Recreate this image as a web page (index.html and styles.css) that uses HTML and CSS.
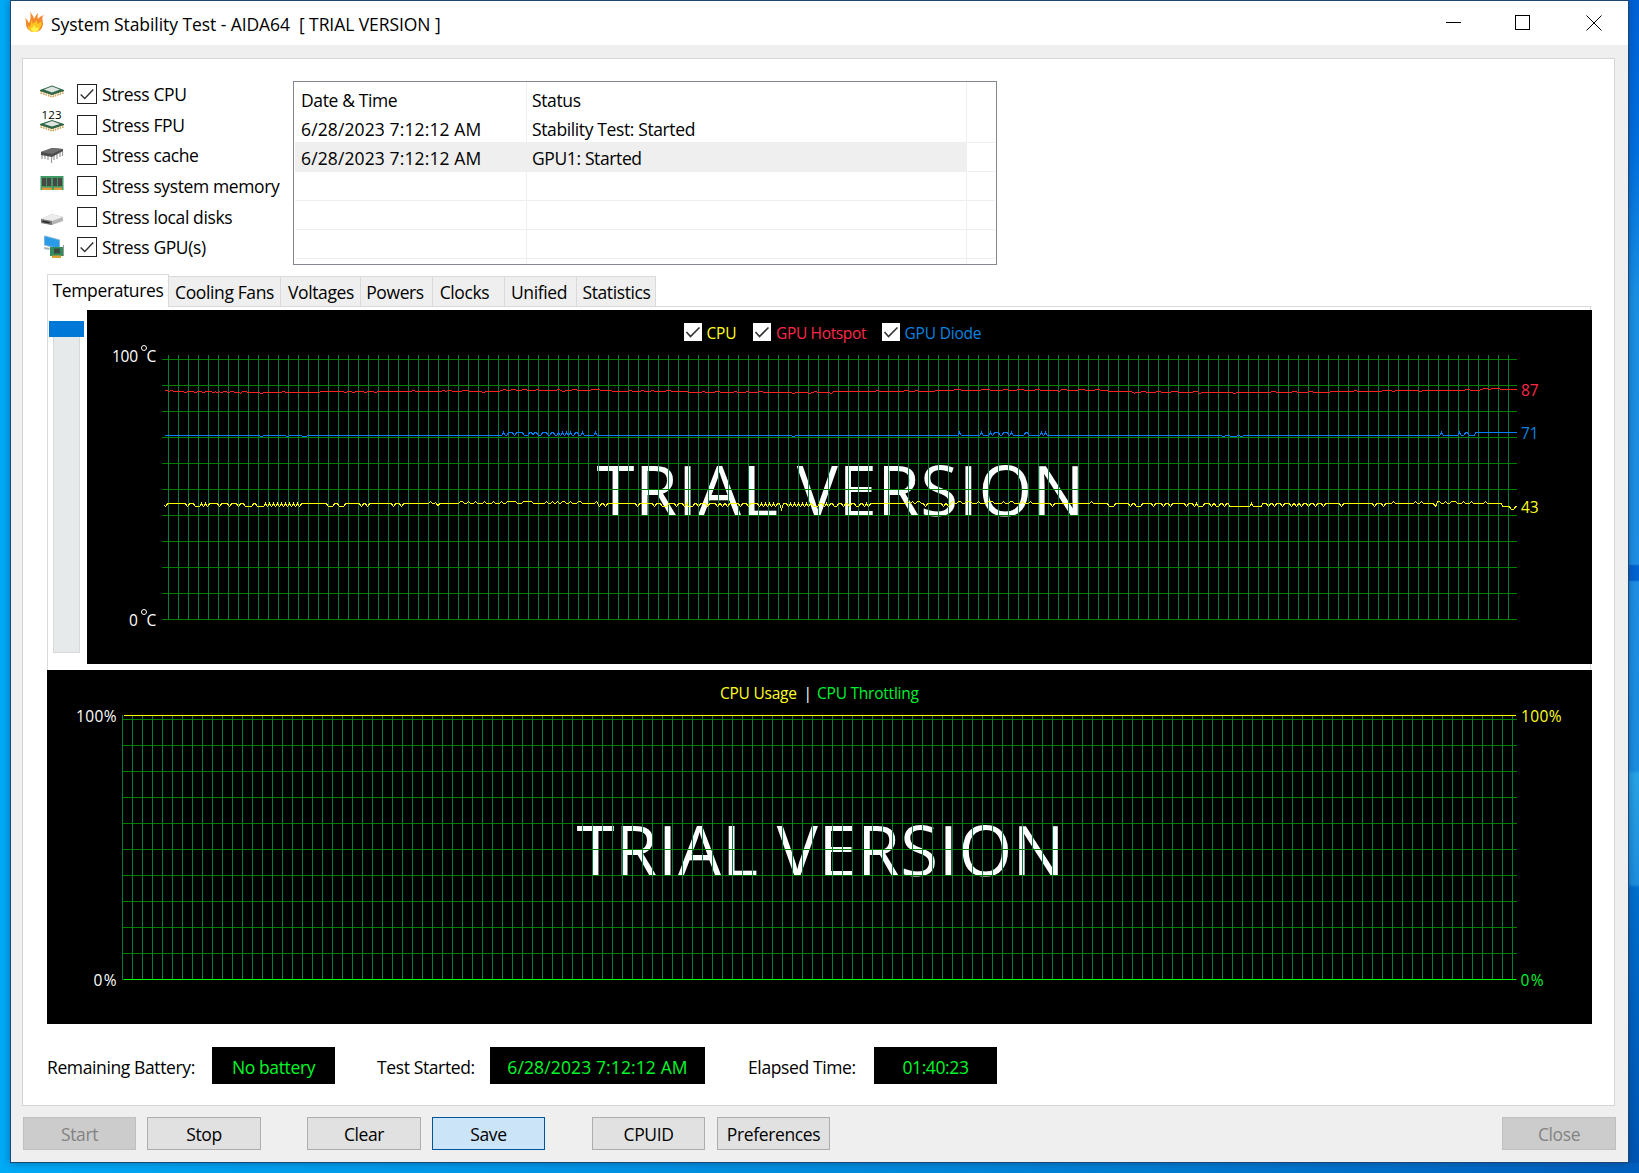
FILE: index.html
```html
<!DOCTYPE html>
<html lang="en">
<head>
    <meta charset="UTF-8">
    <meta name="viewport" content="width=device-width, initial-scale=1.0">
    <title>System Stability Test - AIDA64</title>
    <link rel="stylesheet" href="styles.css">
</head>
<body>
    <div class="window">
        <div class="titlebar">
            <svg class="flame" width="20" height="24" viewBox="0 0 20 24">
                <path d="M5 1c1 3 4 5 4 8 1-2 2-4 4-6 0 2-1 4 0 6 1-2 3-3 6-4-3 3-1 5-1 8 0 5-3 9-8 9-6 0-9-4-9-8 0-2 0-4-1-6 2 1 3 3 4 5 2-4 2-8 1-12z" fill="#f58a2c"/>
                <path d="M6 10c1 2 2 3 2 4 1-1 3-3 4-4 0 2 0 3 1 4l4-3c-1 3 0 4-2 7-1 3-4 4-6 4-4 0-6-3-6-6l2 1c1-2 1-4 1-7z" fill="#ffc51f"/>
                <path d="M6 18c2 1 2-2 3-3l2 3 3-1c0 3-2 5-4 5-3 0-4-2-4-4z" fill="#fff04a"/>
            </svg>
            <span class="title-text">System Stability Test - AIDA64&nbsp; [ TRIAL VERSION ]</span>
            <svg class="win-buttons" width="156" height="16" viewBox="0 0 156 16" shape-rendering="crispEdges">
                <path d="M0 7.500H15M69.500.500h14v14h-14z" fill="none" stroke="#000"/>
                <path d="M140.500 .500l15 15M155.500 .500l-15 15" stroke="#000" shape-rendering="auto"/>
            </svg>
        </div>

        <div class="panel">
            <div class="top">
                <div class="stress-list">
                    <div class="stress">
                        <svg class="icon" viewBox="0 0 24 30">
                            <path d="M1 12l11 4 11-4v2l-11 4-11-4z" fill="none" stroke="#c9a04e" stroke-width="1.500" stroke-dasharray="1.500 1"/>
                            <path d="M0 11l12-4.500 12 4.500v1l-12 4-12-4z" fill="#2f6548"/>
                            <path d="M4 10.500l8-3 8 3-8 3z" fill="#dfe6e1"/>
                        </svg>
                        <span class="box"><svg viewBox="0 0 20 20"><path d="M3 10.500l4.500 4.500 9.500-10"/></svg></span>
                        <span>Stress CPU</span>
                    </div>
                    <div class="stress">
                        <svg class="icon" viewBox="0 0 24 30">
                            <text x="1.500" y="8.500" textLength="20">123</text>
                            <path d="M1 15l11 4 11-4v2l-11 4-11-4z" fill="none" stroke="#c9a04e" stroke-width="1.500" stroke-dasharray="1.500 1"/>
                            <path d="M0 14l12-4 12 4v1l-12 4-12-4z" fill="#2f6548"/>
                            <path d="M4 14l8-3 8 3-8 2.500z" fill="#dfe6e1"/>
                        </svg>
                        <span class="box"></span>
                        <span>Stress FPU</span>
                    </div>
                    <div class="stress">
                        <svg class="icon" viewBox="0 0 24 30">
                            <path d="M2 14v5M5 15v4M8 16v4M11.500 16v7M14 15v5M17 13v6M20 12v5M22.500 11v5" stroke="#9a9a9a" stroke-width="1.200"/>
                            <path d="M1 12l11-4 11 1v2l-11 6-11-2z" fill="#4c4c4c"/>
                            <path d="M1 12l11-4 11 1-11 5z" fill="#6e6e6e"/>
                        </svg>
                        <span class="box"></span>
                        <span>Stress cache</span>
                    </div>
                    <div class="stress">
                        <svg class="icon" viewBox="0 0 24 30">
                            <path d="M.500 5h23v14h-23z" fill="#3f9a63"/>
                            <path d="M2 7h4v8h-4zM7 7h4v8h-4zM13 7h4v8h-4zM18 7h4v8h-4z" fill="#484848"/>
                            <path d="M2 16.500h10v2.500h-10zM14 16.500h8v2.500h-8z" fill="#d99a3b"/>
                        </svg>
                        <span class="box"></span>
                        <span>Stress system memory</span>
                    </div>
                    <div class="stress">
                        <svg class="icon" viewBox="0 0 24 30">
                            <path d="M1 17l11-5 11 3v4l-11 4-11-2z" fill="#b5b5b5"/>
                            <path d="M1 17l11-5 11 3-11 4z" fill="#ececec"/>
                            <path d="M1 17l11 2v4l-11-2z" fill="#777"/>
                            <path d="M2.500 18.500l7 1.500v1.500l-7-1.500z" fill="#222"/>
                        </svg>
                        <span class="box"></span>
                        <span>Stress local disks</span>
                    </div>
                    <div class="stress">
                        <svg class="icon" viewBox="0 0 24 30">
                            <path d="M4.500 4l15 4v9l-15-4z" fill="#2a9be8" stroke="#7cb2d6"/>
                            <path d="M4 15l6 1-1 2-5-1z" fill="#a8b4bc"/>
                            <path d="M10 15h13v9h-13z" fill="#348c5c"/>
                            <path d="M14 16.500h6v5h-6z" fill="#3b4b42"/>
                            <path d="M23.500 13v11" stroke="#999"/>
                            <path d="M12 23.500h9v2.500h-9z" fill="#e0a030"/>
                        </svg>
                        <span class="box"><svg viewBox="0 0 20 20"><path d="M3 10.500l4.500 4.500 9.500-10"/></svg></span>
                        <span>Stress GPU(s)</span>
                    </div>
                </div>

                <div class="log">
                    <div class="log-row log-head"><span>Date &amp; Time</span><span>Status</span><span></span></div>
                    <div class="log-row"><span class="date">6/28/2023 7:12:12 AM</span><span>Stability Test: Started</span><span></span></div>
                    <div class="log-row selected"><span class="date">6/28/2023 7:12:12 AM</span><span>GPU1: Started</span><span></span></div>
                    <div class="log-row"><span></span><span></span><span></span></div>
                    <div class="log-row"><span></span><span></span><span></span></div>
                    <div class="log-row"><span></span><span></span><span></span></div>
                    <div class="log-row"><span></span><span></span><span></span></div>
                </div>
            </div>

            <div class="tabs">
                <div class="tab active">Temperatures</div>
                <div class="tab t-fans">Cooling Fans</div>
                <div class="tab t-volt">Voltages</div>
                <div class="tab t-pow">Powers</div>
                <div class="tab t-clk">Clocks</div>
                <div class="tab t-uni">Unified</div>
                <div class="tab t-stat">Statistics</div>
            </div>

            <div class="tab-page">
                <div class="slider">
                    <div class="thumb"></div>
                    <div class="track"></div>
                </div>
                <svg id="tempChart" class="chart" width="1505" height="354" viewBox="87 310 1505 354">
                    <text class="watermark" x="596.500" y="515.500" textLength="488">TRIAL VERSION</text>
                    <g class="grid"></g>
                    <g class="series"></g>
                    <g class="checks">
                        <path class="check-bg" d="M684 323h18v18h-18zM753 323h18v18h-18zM882 323h18v18h-18z"/>
                        <path class="check-mark" d="M686.500 332l4 4.500 9-9M755.500 332l4 4.500 9-9M884.500 332l4 4.500 9-9"/>
                    </g>
                    <text class="yellow" x="706.500" y="339" textLength="30">CPU</text>
                    <text class="red" x="776" y="339" textLength="90.500">GPU Hotspot</text>
                    <text class="blue" x="904.500" y="339" textLength="77">GPU Diode</text>
                    <text x="112" y="361.500" textLength="26">100</text>
                    <text x="146.500" y="361.500">C</text>
                    <text x="129" y="625.500">0</text>
                    <text x="146.500" y="625.500">C</text>
                    <circle cx="144" cy="348" r="2.500"/>
                    <circle cx="144" cy="612" r="2.500"/>
                    <text class="red" x="1521" y="395.500" textLength="17.500">87</text>
                    <text class="blue" x="1521" y="438.500" textLength="17.500">71</text>
                    <text class="yellow" x="1521" y="512.500" textLength="17.500">43</text>
                </svg>
            </div>

            <svg id="cpuChart" class="chart cpu-chart" width="1545" height="354" viewBox="47 670 1545 354">
                <text class="watermark" x="576.500" y="875.500" textLength="488">TRIAL VERSION</text>
                <g class="grid"></g>
                <g class="series"></g>
                <text class="yellow" x="720" y="699" textLength="77">CPU Usage</text>
                <text x="803.500" y="699">|</text>
                <text class="green" x="817" y="699" textLength="102">CPU Throttling</text>
                <text x="76" y="721.500" textLength="40.500">100%</text>
                <text x="93.500" y="985.500" textLength="23">0%</text>
                <text class="yellow" x="1521" y="721.500" textLength="40.500">100%</text>
                <text class="green" x="1520.500" y="985.500" textLength="23">0%</text>
            </svg>

            <div class="status">
                <span class="label lb-bat">Remaining Battery:</span>
                <span class="readout r-bat">No battery</span>
                <span class="label lb-start">Test Started:</span>
                <span class="readout r-start date">6/28/2023 7:12:12 AM</span>
                <span class="label lb-time">Elapsed Time:</span>
                <span class="readout r-time">01:40:23</span>
            </div>
        </div>

        <div class="buttons">
            <button class="disabled start">Start</button>
            <button class="stop">Stop</button>
            <button class="clear">Clear</button>
            <button class="save">Save</button>
            <button class="cpuid">CPUID</button>
            <button class="prefs">Preferences</button>
            <button class="disabled close">Close</button>
        </div>
    </div>

    <script>
        function grid(svg, x0, x1, firstX, lastX, top, firstY) {
            let v = '', h = '';
            for (let x = firstX; x <= lastX; x += 10) v += `M${x + 0.5} ${top}V${firstY + 261}`;
            for (let i = 0; i <= 10; i++) h += `M${x0} ${firstY + i * 26 + 0.5}H${x1}`;
            svg.querySelector('.grid').innerHTML =
                `<path class="grid-v" d="${v}"/><path class="grid-h" d="${h}"/>`;
        }

        // base: [x, y] steps, blips: [x, dy, width]
        function line(svg, color, base, blips) {
            const end = 1516;
            let d = '';
            for (let x = 164; x <= end; x += 1) {
                let y = base[0][1];
                base.forEach(b => { if (x >= b[0]) y = b[1]; });
                blips.forEach(b => {
                    const half = (b[2] || 1) / 2;
                    const dist = Math.abs(x - b[0]) - half;
                    if (dist <= 0) y += b[1];
                    else if (dist < 1.5) y += b[1] / 2;
                });
                d += (d ? 'L' : 'M') + (x + 0.5) + ' ' + (Math.round(y) + 0.5);
            }
            svg.querySelector('.series').innerHTML += `<path stroke="${color}" d="${d}"/>`;
        }

        function blips(dy, list) {
            return list.map(p => Array.isArray(p) ? [p[0], dy, p[1]] : [p, dy, 1]);
        }

        const temp = document.getElementById('tempChart');
        const cpu = document.getElementById('cpuChart');
        grid(temp, 162, 1517, 168, 1508, 355, 359);
        grid(cpu, 122, 1517, 122, 1512, 715, 719);

        line(temp, '#ff2020', [[164, 391], [240, 392], [320, 391], [500, 390], [612, 391], [688, 392], [832, 391], [935, 390], [1108, 391], [1134, 392], [1330, 391], [1382, 390], [1480, 389]], [
            ...blips(-1, [[166, 2], [171, 2], [244, 4], [283, 3], [413, 3], [443, 3], [449, 4], [465, 6], [504, 3], [513, 4], [524, 5], [537, 2], [558, 3], [574, 4], [595, 8], [630, 3], [642, 3], [652, 3], [668, 4], [703, 3], [717, 4], [735, 3], [747, 3], [760, 5], [815, 3], [877, 3], [906, 4], [916, 3], [957, 7], [985, 8], [1005, 4], [1020, 6], [1037, 4], [1063, 6], [1081, 7], [1097, 4], [1143, 4], [1158, 5], [1174, 6], [1195, 4], [1273, 4], [1294, 4], [1310, 5], [1355, 3], [1467, 4], [1485, 4], [1495, 9]]),
            ...blips(1, [185, 195, 203, 213, 217, 221, 228, [237, 5], 261, 345, 353, 365, 375, 483, 563, 793, 809, 831, 1059, 1133, 1199, 1234, 1393, 1420])
        ]);
        line(temp, '#0080ff', [[164, 435], [1475, 432]], [
            ...blips(-3, [503, [510, 4], [519, 7], [530, 2], [535, 3], [544, 4], [552, 2], 558, 562, 566, 570, [576, 3], 582, 595, 959, 981, 990, [996, 5], [1005, 5], 1011, [1026, 3], 1041, 1045, 1441, 1459, [1466, 2]]),
            ...blips(1, [261, 287, [304, 3], 793, 1223, [1233, 4], 1241])
        ]);
        line(temp, '#ffff00', [[164, 503], [1229, 506], [1262, 503], [1502, 506]], [
            ...blips(3, [165, 187, [197, 4], 203, 207, 219, 229, 238, [248, 7], [260, 6], 267, 271, 275, 279, 283, 287, 291, 295, 299, [330, 4], [341, 4], 361, 367, 393, 401, 437, 599, 605, 637, 654, [664, 4], 676, 684, [690, 4], 698, 707, 717, 722, 727, 740, 748, 759, 763, 767, 771, 775, 788, 792, 796, 800, 804, 808, [815, 4], 824, 828, [835, 3], 843, 849, [857, 3], 864, 868, 925, 943, 948, 1052, [1111, 5], 1130, [1138, 4], 1153, 1163, 1170, 1186, 1194, [1200, 4], 1211, [1217, 3], 1224, 1268, 1274, 1282, 1291, 1296, 1301, 1308, 1315, 1323, 1341, 1374, 1383, 1435, [1512, 3]]),
            ...blips(6, [781]),
            ...blips(-3, [1251]),
            ...blips(-2, [430, 436, [461, 3], 468, 475, 484, 493, 501, [511, 8], [527, 8], 546, 552, 557, [563, 3], 570, [579, 3], 596, 907, 912, [918, 3], 952, [959, 3], [968, 5], 978, [990, 4], 1003, [1011, 3], 1022, 1030, 1091, 1393, 1415, 1421, [1438, 3], 1445, [1453, 5], 1463, 1471, 1485])
        ]);
        cpu.querySelector('.series').innerHTML =
            '<path stroke="#ffff00" d="M124 715.5H1516"/><path stroke="#00ff00" d="M124 979.5H1516"/>';
    </script>
</body>
</html>
```
FILE: styles.css
```css
* {
    margin: 0;
    padding: 0;
    box-sizing: border-box;
}

body {
    width: 1639px;
    height: 1173px;
    overflow: hidden;
    padding-left: 10px;
    font-family: "Open Sans", "Noto Sans", sans-serif;
    font-size: 17.5px;
    letter-spacing: -0.38px;
    color: #000;
    white-space: nowrap;
    background:
        linear-gradient(#0063d8, #0070e0 150px, #1b92e6 300px, #1f8fe6 564px, #0064d2 566px, #0064d2 580px, #1f90e6 582px, #1b8fe2 770px, #28a4e6 774px, #1f8fe0 884px, #0070cf 888px, #0056b4) right top / 12px 1163px no-repeat,
        linear-gradient(90deg, #00aaf5, #0087da 60%, #0060bd);
}

.window {
    width: 1619px;
    height: 1163px;
    border: 1px solid #1b4772;
    background: #efefef;
    box-shadow: 0 0 8px rgba(0, 40, 90, 0.45);
}

.titlebar {
    display: flex;
    height: 44px;
    padding: 9px 26px 0 14px;
    background: #fff;
}

.title-text {
    margin-left: 6px;
    line-height: 28px;
    letter-spacing: -0.07px;
    flex: 1;
}

.win-buttons {
    margin-top: 5px;
}

.panel {
    width: 1593px;
    height: 1048px;
    margin: 13px 0 0 11px;
    padding: 20px 0 0 24px;
    border: 1px solid #d5d5d5;
    background: #fff;
}

.top {
    display: flex;
    height: 195px;
    margin-left: -7px;
}

.stress-list {
    width: 253px;
}

.stress {
    display: flex;
    align-items: center;
    height: 30.6px;
}

.stress .icon {
    width: 24px;
    height: 30px;
    overflow: visible;
}

.icon text {
    font: 11.5px "Open Sans", sans-serif;
    letter-spacing: 0;
}

.box {
    width: 20px;
    height: 20px;
    margin: 0 5px 0 13px;
    border: 1px solid #222;
    background: #fff;
}

.box svg {
    display: block;
    width: 18px;
    height: 18px;
}

.box path, .check-mark {
    fill: none;
    stroke: #333;
    stroke-width: 1.6;
}

.log {
    width: 704px;
    height: 184px;
    margin-top: 2px;
    border: 1px solid #828790;
    overflow: hidden;
}

.log-row {
    display: grid;
    grid-template-columns: 232px 440px 1fr;
    height: 29px;
    margin: 0 1px;
    line-height: 31px;
    border-bottom: 1px solid #efefef;
}

.log-row span {
    height: 28px;
    padding-left: 5px;
    border-right: 1px solid #efefef;
}

.log-row span:first-child {
    padding-left: 6px;
}

.log-row span:last-child {
    border-right: none;
}

.log-head {
    height: 32px;
    line-height: 36px;
    border-bottom: none;
}

.log-head span {
    height: 32px;
}

.log-row .date, .status .date {
    letter-spacing: 0.12px;
}

.selected span:not(:last-child) {
    background: #efefef;
}

.tabs {
    display: flex;
    align-items: flex-end;
    height: 32px;
}

.tab {
    height: 30px;
    line-height: 31px;
    text-align: center;
    background: #efefef;
    border: 1px solid #dadada;
    border-width: 1px 1px 0 0;
}

.tab.active {
    width: 122px;
    height: 33px;
    margin-bottom: -1px;
    line-height: 31px;
    background: #fff;
    border-left-width: 1px;
}

.t-fans { width: 112px; }
.t-volt { width: 80px; padding-left: 1px; }
.t-pow { width: 72px; padding-right: 3px; }
.t-clk { width: 72px; padding-right: 8px; }
.t-uni { width: 72px; padding-right: 3px; }
.t-stat { width: 79px; padding-left: 1px; }

.tab-page {
    display: flex;
    width: 1544px;
    height: 364px;
    padding-top: 3px;
    border: 1px solid #dadada;
    border-bottom: none;
}

.slider {
    width: 39px;
    flex: none;
    padding: 11px 0 0 1px;
}

.thumb {
    width: 35px;
    height: 16px;
    background: #0078d7;
}

.track {
    width: 27px;
    height: 316px;
    margin-left: 4px;
    background: #e6eaea;
    border: 1px solid #d6d9d9;
    border-top: none;
}

.chart {
    display: block;
    flex: none;
    background: #000;
}

.chart text {
    fill: #fff;
    font-size: 15.5px;
    letter-spacing: 0;
}

.chart .watermark {
    font-size: 69px;
}

.chart .yellow { fill: #ffff20; }
.chart .red { fill: #ff2846; }
.chart .blue { fill: #0a84e0; }
.chart .green { fill: #00f030; }

.chart circle {
    fill: none;
    stroke: #fff;
}

.grid path, .series path {
    fill: none;
    shape-rendering: crispEdges;
}

.grid-v { stroke: #008040; }
.grid-h { stroke: #008000; }
.check-bg { fill: #fff; }

.status {
    display: flex;
    height: 37px;
    margin-top: 23px;
    line-height: 40px;
}

.lb-bat { width: 165px; }
.lb-start { width: 113px; margin-left: 42px; }
.lb-time { width: 126px; margin-left: 43px; }

.readout {
    background: #000;
    color: #00f82a;
    text-align: center;
}

.r-bat { width: 123px; }
.r-start { width: 215px; }
.r-time { width: 123px; }

.buttons {
    display: flex;
    padding: 11px 0 0 12px;
}

button {
    width: 114px;
    height: 33px;
    font: inherit;
    letter-spacing: inherit;
    color: #000;
    background: #e1e1e1;
    border: 1px solid #adadad;
}

button.disabled {
    color: #838383;
    background: #ccc;
    border-color: #bfbfbf;
}

.start { width: 113px; }
.stop { margin-left: 11px; }
.clear { margin-left: 46px; }
.cpuid { width: 113px; margin-left: 47px; }
.prefs { width: 113px; margin-left: 12px; }
.close { margin-left: 672px; }

.save {
    width: 113px;
    margin-left: 11px;
    background: #cce4f7;
    border-color: #005499;
}
```
